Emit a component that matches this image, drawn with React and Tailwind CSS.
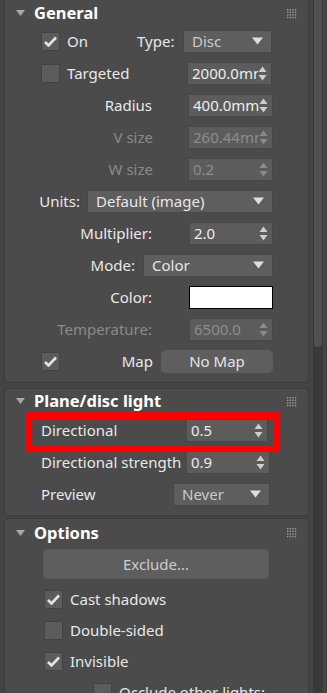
import React from 'react'

const font = { fontFamily: '"Noto Sans", "Open Sans", Arial, sans-serif' }

const Grip = () => (
  <svg width="10" height="10" viewBox="0 0 10 10" className="shrink-0">
    {[0, 1, 2, 3].map(r =>
      [0, 1, 2, 3].map(c => (
        <rect key={`${r}-${c}`} x={c * 2.6} y={r * 2.6} width="1.4" height="1.4" fill="#9a9a9a" />
      ))
    )}
  </svg>
)

const Caret = () => (
  <svg width="9" height="7" viewBox="0 0 9 7" className="shrink-0">
    <path d="M0 0 H9 L4.5 6 Z" fill="#a8a8a8" />
  </svg>
)

const DownArrow = () => (
  <svg width="11" height="8" viewBox="0 0 11 8" className="shrink-0">
    <path d="M0 0.5 H11 L5.5 7.5 Z" fill="#dedede" />
  </svg>
)

const SpinArrows = ({ disabled }) => (
  <svg width="9" height="15" viewBox="0 0 9 15" className="shrink-0">
    <path d="M4.5 0.5 L8.5 6 H0.5 Z" fill={disabled ? '#8a8a8a' : '#cfcfcf'} />
    <path d="M0.5 9 H8.5 L4.5 14.5 Z" fill={disabled ? '#8a8a8a' : '#cfcfcf'} />
  </svg>
)

const Check = ({ checked }) => (
  <div className="w-[19px] h-[19px] shrink-0 bg-[#5c5c5c] border border-[#434343] flex items-center justify-center">
    {checked && (
      <svg width="13" height="11" viewBox="0 0 13 11">
        <path d="M1 6 L4.5 9.5 L12 1.5" stroke="#e4e4e4" strokeWidth="2.6" fill="none" />
      </svg>
    )}
  </div>
)

const Spinner = ({ value, w, disabled }) => (
  <div
    className={`h-[23px] shrink-0 bg-[#5c5c5c] border border-[#474747] flex items-center pl-[4px] pr-[4px] ${w}`}
  >
    <span className={`flex-1 overflow-hidden whitespace-nowrap text-[15px] ${disabled ? 'text-[#8c8c8c]' : 'text-[#ececec]'}`}>
      {value}
    </span>
    <SpinArrows disabled={disabled} />
  </div>
)

const Dropdown = ({ value, w, dim }) => (
  <div className={`h-[23px] shrink-0 bg-[#5e5e5e] border border-[#474747] flex items-center pl-[8px] pr-[8px] ${w}`}>
    <span className={`flex-1 whitespace-nowrap text-[15px] ${dim ? 'text-[#cbcbcb]' : 'text-[#e6e6e6]'}`}>{value}</span>
    <DownArrow />
  </div>
)

const Header = ({ title, h }) => (
  <div className={`flex items-center pl-[11px] pr-[11px] ${h}`}>
    <Caret />
    <span className="ml-[9px] flex-1 font-bold text-[16.5px] text-white">{title}</span>
    <Grip />
  </div>
)

// label right-aligned against the control
const RightRow = ({ label, labelW, gap, children, disabled }) => (
  <div className="flex items-center h-[32px]">
    <span className={`text-right text-[15px] whitespace-nowrap shrink-0 ${labelW} ${gap} ${disabled ? 'text-[#8a8a8a]' : 'text-[#e8e8e8]'}`}>
      {label}
    </span>
    {children}
  </div>
)

export default function App() {
  return (
    <div className="w-[327px] h-[693px] overflow-hidden bg-[#444444] flex" style={font}>
      <div className="w-[309px] pl-[4px] flex flex-col">
        {/* General */}
        <div className="bg-[#4b4b4b] border-x border-b border-[#3b3b3b] rounded-b-[4px] pb-[5px]">
          <Header title="General" h="h-[25px] pt-[2px]" />
          <div className="flex items-center h-[32px] pl-[36px]">
            <Check checked />
            <span className="ml-[7px] text-[15px] text-[#e8e8e8] w-[70px]">On</span>
            <span className="text-[15px] text-[#e8e8e8] w-[46px]">Type:</span>
            <Dropdown value="Disc" w="w-[89px]" dim />
          </div>
          <div className="flex items-center h-[32px] pl-[36px]">
            <Check />
            <span className="ml-[7px] text-[15px] text-[#e8e8e8] w-[120px]">Targeted</span>
            <Spinner value="2000.0mm" w="w-[85px]" />
          </div>
          <RightRow label="Radius" labelW="w-[147px]" gap="mr-[36px]">
            <Spinner value="400.0mm" w="w-[85px]" />
          </RightRow>
          <RightRow label="V size" labelW="w-[148px]" gap="mr-[35px]" disabled>
            <Spinner value="260.44mm" w="w-[85px]" disabled />
          </RightRow>
          <RightRow label="W size" labelW="w-[148px]" gap="mr-[35px]" disabled>
            <Spinner value="0.2" w="w-[85px]" disabled />
          </RightRow>
          <RightRow label="Units:" labelW="w-[75px]" gap="mr-[7px]">
            <Dropdown value="Default (image)" w="w-[186px]" />
          </RightRow>
          <RightRow label="Multiplier:" labelW="w-[147px]" gap="mr-[37px]">
            <Spinner value="2.0" w="w-[84px]" />
          </RightRow>
          <RightRow label="Mode:" labelW="w-[130px]" gap="mr-[8px]">
            <Dropdown value="Color" w="w-[130px]" />
          </RightRow>
          <RightRow label="Color:" labelW="w-[147px]" gap="mr-[37px]">
            <div className="w-[84px] h-[23px] bg-white border border-black shrink-0" />
          </RightRow>
          <RightRow label="Temperature:" labelW="w-[147px]" gap="mr-[37px]" disabled>
            <Spinner value="6500.0" w="w-[84px]" disabled />
          </RightRow>
          <div className="flex items-center h-[32px] pl-[36px]">
            <Check checked />
            <span className="text-[15px] text-[#e8e8e8] w-[93px] text-right">Map</span>
            <div className="ml-[8px] w-[112px] h-[23px] rounded-[5px] bg-[#5e5e5e] flex items-center justify-center text-[15px] text-[#e4e4e4]">
              No Map
            </div>
          </div>
        </div>

        {/* Plane/disc light */}
        <div className="mt-[5px] bg-[#4b4b4b] border border-[#3b3b3b] rounded-[4px] pb-[5px]">
          <Header title="Plane/disc light" h="h-[25px]" />
          <div className="relative flex items-center h-[32px] pl-[36px]">
            <span className="text-[15px] text-[#e8e8e8] w-[145px]">Directional</span>
            <Spinner value="0.5" w="w-[82px]" />
            <div className="absolute left-[20px] top-[-2px] w-[255px] h-[40px] border-[7px] border-[#ff0000] pointer-events-none" />
          </div>
          <div className="flex items-center h-[32px] pl-[36px]">
            <span className="text-[15px] text-[#e8e8e8] w-[145px] whitespace-nowrap">Directional strength</span>
            <Spinner value="0.9" w="w-[84px]" />
          </div>
          <div className="flex items-center h-[32px] pl-[36px]">
            <span className="text-[15px] text-[#e8e8e8] w-[132px]">Preview</span>
            <Dropdown value="Never" w="w-[97px]" dim />
          </div>
        </div>

        {/* Options */}
        <div className="mt-[2px] bg-[#4b4b4b] border border-[#3b3b3b] rounded-t-[4px] flex-1">
          <Header title="Options" h="h-[28px]" />
          <div className="ml-[38px] mt-[2px] w-[226px] h-[30px] rounded-[5px] bg-[#5e5e5e] flex items-center justify-center text-[15px] text-[#cdcdcd]">
            Exclude...
          </div>
          <div className="flex items-center h-[31px] pl-[39px] mt-[5px]">
            <Check checked />
            <span className="ml-[7px] text-[15px] text-[#e8e8e8]">Cast shadows</span>
          </div>
          <div className="flex items-center h-[31px] pl-[39px]">
            <Check />
            <span className="ml-[7px] text-[15px] text-[#e8e8e8]">Double-sided</span>
          </div>
          <div className="flex items-center h-[31px] pl-[39px]">
            <Check checked />
            <span className="ml-[7px] text-[15px] text-[#e8e8e8]">Invisible</span>
          </div>
          <div className="flex items-center h-[31px] pl-[88px]">
            <Check />
            <span className="ml-[7px] text-[15px] text-[#e8e8e8]">Occlude other lights:</span>
          </div>
        </div>
      </div>

      {/* scrollbar */}
      <div className="w-[18px] flex pl-[4px] pr-[4px]">
        <div className="w-[10px] h-full bg-[#393939] rounded-b-[4px] flex flex-col">
          <div className="h-[347px] bg-[#505050] rounded-b-[5px] mx-[1px]" />
        </div>
      </div>
    </div>
  )
}
